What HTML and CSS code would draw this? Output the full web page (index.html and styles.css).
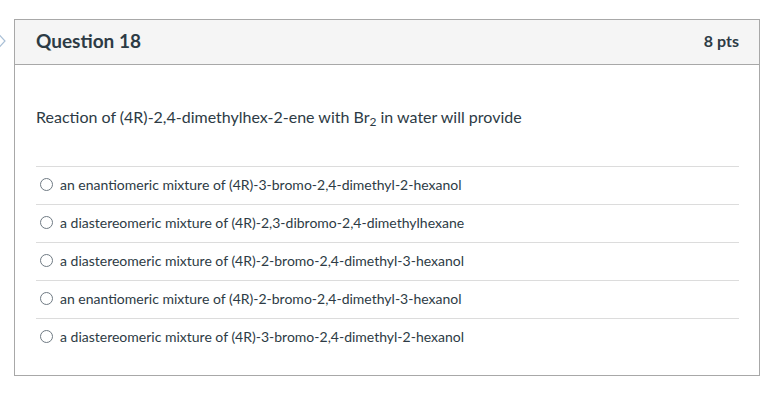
FILE: index.html
```html
<!DOCTYPE html>
<html>
<head>
<meta charset="utf-8">
<link rel="stylesheet" href="styles.css">
</head>
<body>
<div class="page">
  <svg class="nav-chevron" width="8" height="16" viewBox="0 0 8 16"><path d="M-1 1.5 L5 8 L-1 14.5" fill="none" stroke="#a9bfd6" stroke-width="1.2"/></svg>
  <div class="card">
    <div class="card-header">
      <h2 class="title">Question 18</h2>
      <span class="pts">8 pts</span>
    </div>
    <div class="card-body">
      <p class="prompt">Reaction of (4R)-2,4-dimethylhex-2-ene with Br<sub>2</sub> in water will provide</p>
      <div class="answers">
        <label class="answer"><span class="radio"></span><span>an enantiomeric mixture of (4R)-3-bromo-2,4-dimethyl-2-hexanol</span></label>
        <label class="answer"><span class="radio"></span><span>a diastereomeric mixture of (4R)-2,3-dibromo-2,4-dimethylhexane</span></label>
        <label class="answer"><span class="radio"></span><span>a diastereomeric mixture of (4R)-2-bromo-2,4-dimethyl-3-hexanol</span></label>
        <label class="answer"><span class="radio"></span><span>an enantiomeric mixture of (4R)-2-bromo-2,4-dimethyl-3-hexanol</span></label>
        <label class="answer"><span class="radio"></span><span>a diastereomeric mixture of (4R)-3-bromo-2,4-dimethyl-2-hexanol</span></label>
      </div>
    </div>
  </div>
</div>
</body>
</html>
```
FILE: styles.css
```css
html, body {
  margin: 0;
  padding: 0;
  background: #ffffff;
}
body {
  font-family: Lato, "Open Sans", "Liberation Sans", sans-serif;
  color: #2d3b45;
}
.page {
  position: relative;
  padding: 19px 0 0 14px;
}
.nav-chevron {
  position: absolute;
  left: 0;
  top: 33px;
}
.card {
  width: 744px;
  border: 1px solid #a8a8a8;
  box-sizing: content-box;
}
.card-header {
  display: flex;
  align-items: center;
  justify-content: space-between;
  height: 41px;
  padding: 0 20px 3px 21px;
  background: #f5f5f5;
  border-bottom: 1px solid #a8a8a8;
}
.title {
  margin: 0;
  font-size: 19px;
  font-weight: 700;
  color: #2d3b45;
}
.pts {
  font-size: 16px;
  font-weight: 700;
  color: #2d3b45;
}
.card-body {
  padding: 40px 20px 19px 21px;
}
.prompt {
  margin: 0 0 37px 0;
  font-size: 16px;
  line-height: 24px;
}
.prompt sub {
  font-size: 12px;
  line-height: 0;
  vertical-align: -3px;
}
.answers {
  display: flex;
  flex-direction: column;
}
.answer {
  display: flex;
  align-items: center;
  gap: 7px;
  height: 35px;
  padding-bottom: 2px;
  border-top: 1px solid #dcdcdc;
  padding-left: 4px;
  font-size: 14px;
}
.radio {
  width: 11px;
  height: 11px;
  border: 1px solid #6f7a83;
  border-radius: 50%;
  flex: none;
}
```
